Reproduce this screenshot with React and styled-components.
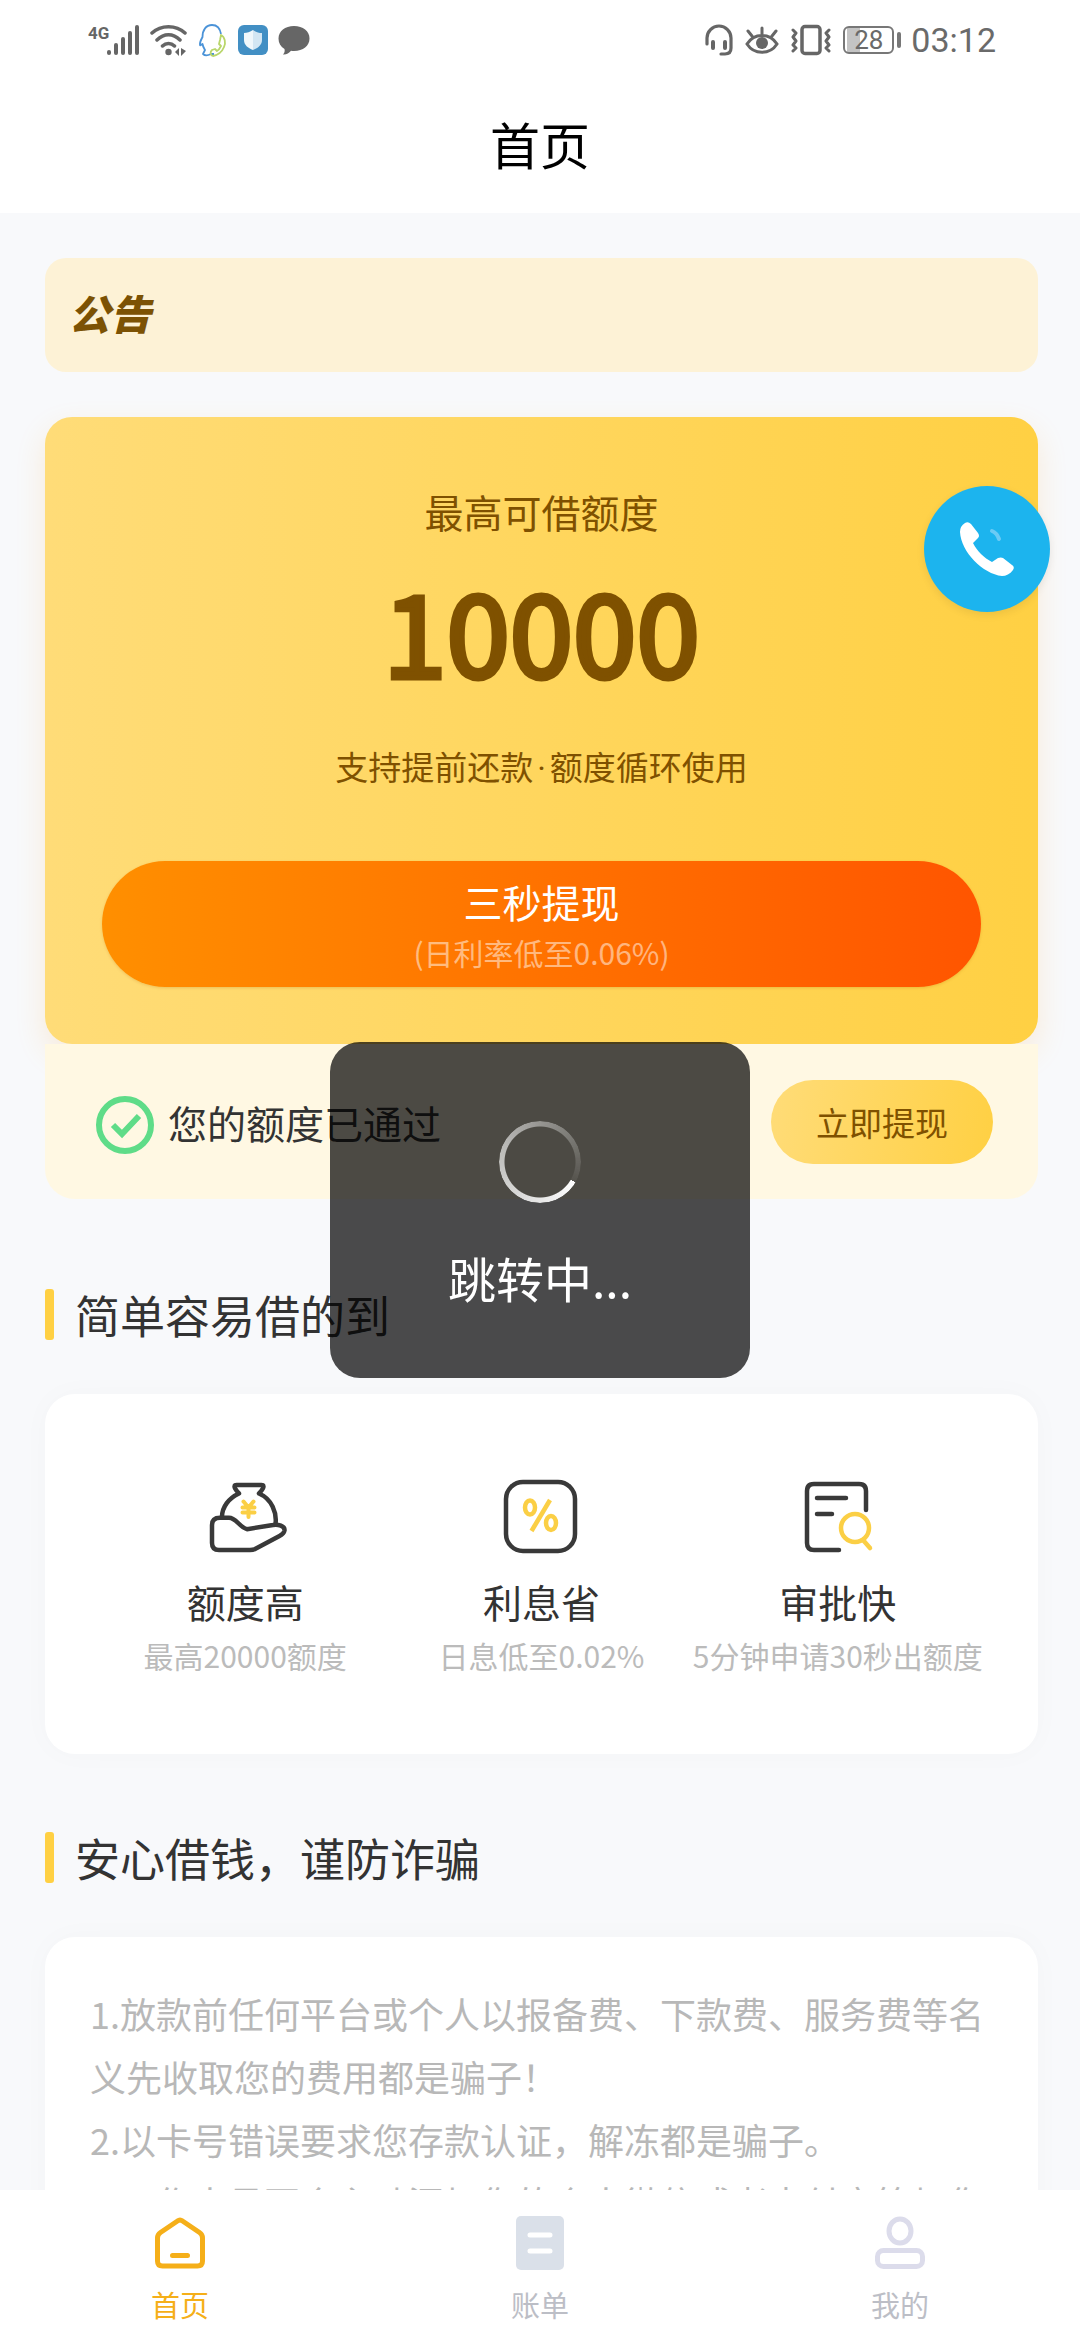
import { useState } from 'react'
import styled, { createGlobalStyle } from 'styled-components'

const GlobalStyle = createGlobalStyle`
  * {
    box-sizing: border-box;
  }

  body {
    margin: 0;
    background: #fff;
    color: #333;
    font-family: 'Noto Sans CJK SC', 'Noto Sans', sans-serif;
  }

  button {
    border: none;
    padding: 0;
    font-family: inherit;
    cursor: pointer;
  }

  h1, h2, h3, p {
    margin: 0;
    padding: 0;
    font-weight: 400;
  }
`

const Phone = styled.div`
  height: 100vh;
  display: flex;
  flex-direction: column;
  overflow: hidden;
`

const StatusBar = styled.div`
  flex: none;
  height: 80px;
  padding: 0 84px 0 88px;
  display: flex;
  align-items: center;
  justify-content: space-between;
  color: #6a6a6a;
  font-family: Roboto, sans-serif;
`

const StatusGroup = styled.div`
  display: flex;
  align-items: center;
  gap: ${(p) => p.$gap}px;

  svg {
    display: block;
  }
`

const Battery = styled.span`
  position: relative;
  display: flex;
  align-items: center;
  justify-content: center;
  width: 51px;
  height: 28px;
  margin-right: 5px;
  border: 2px solid #777;
  border-radius: 6px;
  background: linear-gradient(90deg, transparent 2px, #c4c4c4 2px, #c4c4c4 15px, transparent 15px);
  font-size: 26px;
  line-height: 24px;

  &::after {
    content: '';
    position: absolute;
    right: -9px;
    width: 4px;
    height: 16px;
    border-radius: 2px;
    background: #777;
  }
`

const Clock = styled.span`
  font-size: 34px;
  line-height: 40px;
`

const View = styled.div`
  flex: 1;
  min-height: 0;
  position: relative;
  display: flex;
  flex-direction: column;
`

const NavBar = styled.header`
  flex: none;
  height: 133px;
  padding-bottom: 8px;
  display: flex;
  align-items: center;
  justify-content: center;
  background: #fff;
`

const NavTitle = styled.h1`
  color: #000;
  font-size: 50px;
  line-height: 60px;
`

const Main = styled.main`
  flex: 1;
  min-height: 0;
  padding: 45px 42px 45px 45px;
  overflow-y: auto;
  scrollbar-width: none;
  background: #f8f9fb;
`

const Notice = styled.section`
  height: 114px;
  margin-bottom: 45px;
  padding: 0 24px 6px;
  display: flex;
  align-items: center;
  border-radius: 21px;
  background: #fdf2d6;
`

const NoticeTag = styled.strong`
  color: #7c5204;
  font-size: 41px;
  font-style: italic;
  font-weight: 900;
  line-height: 48px;
`

const QuotaCard = styled.section`
  padding: 64px 57px 57px;
  display: flex;
  flex-direction: column;
  align-items: center;
  border-radius: 27px;
  background: linear-gradient(90deg, #ffdc78, #ffd043);
  box-shadow: 0 12px 30px rgba(255, 160, 40, 0.16);
  color: #7f5100;
`

const QuotaLabel = styled.p`
  font-size: 39px;
  line-height: 60px;
`

const QuotaAmount = styled.p`
  margin: 28px 0 53px;
  font-size: 114px;
  line-height: 120px;
  -webkit-text-stroke: 5px #7f5100;
`

const QuotaHint = styled.p`
  margin-bottom: 71px;
  font-size: 33px;
  line-height: 48px;
`

const Dot = styled.span`
  margin: 0 4px;
  font-family: Roboto, sans-serif;
  line-height: 1;
`

const WithdrawButton = styled.button`
  width: 100%;
  height: 126px;
  padding-top: 6px;
  border-radius: 63px;
  background: linear-gradient(90deg, #ff8f00, #ff5500);
  box-shadow: 0 1px 3px rgba(160, 90, 0, 0.2);
  color: #fff;
  font-size: 39px;
  line-height: 51px;

  small {
    display: block;
    color: rgba(255, 255, 255, 0.5);
    font-size: 30px;
    line-height: 51px;
  }
`

const ApprovedBar = styled.section`
  height: 155px;
  margin-bottom: 12px;
  padding: 0 45px 0 50px;
  display: flex;
  align-items: center;
  gap: 13px;
  border-radius: 0 0 30px 30px;
  background: #fff8e3;
`

const ApprovedText = styled.p`
  flex: 1;
  font-size: 39px;
  line-height: 60px;
`

const SmallButton = styled.button`
  width: 222px;
  height: 84px;
  border-radius: 42px;
  background: linear-gradient(100deg, #ffdc78, #ffd043);
  color: #7f5100;
  font-size: 33px;
  line-height: 48px;
`

const SectionTitle = styled.h2`
  padding: 78px 0 54px;
  display: flex;
  align-items: center;
  gap: 21px;
  font-size: 45px;
  line-height: 51px;

  &::before {
    content: '';
    width: 9px;
    height: 51px;
    border-radius: 3px;
    background: #ffd043;
  }
`

const Panel = styled.section`
  border-radius: 30px;
  background: #fff;
  box-shadow: 0 0 30px rgba(0, 0, 0, 0.025);
`

const Features = styled(Panel)`
  height: 360px;
  padding: 81px 52px 0;
  display: grid;
  grid-template-columns: repeat(3, 1fr);
`

const Feature = styled.div`
  display: flex;
  flex-direction: column;
  align-items: center;
  white-space: nowrap;

  h3 {
    margin-top: 12px;
    font-size: 39px;
    line-height: 60px;
  }

  p {
    color: #bbb;
    font-size: 30px;
    line-height: 48px;
  }
`

const Tips = styled(Panel)`
  padding: 45px;
  color: #b8b8b8;
  font-size: 36px;
  line-height: 63px;
`

const TabBar = styled.nav`
  flex: none;
  height: 150px;
  display: grid;
  grid-template-columns: repeat(3, 1fr);
  background: #fff;
`

const Tab = styled.a`
  display: flex;
  flex-direction: column;
  align-items: center;
  padding-top: 26px;
  color: ${(p) => (p.$active ? '#f5af19' : '#bcbec6')};
  font-size: 29px;
  line-height: 48px;
  text-decoration: none;

  svg {
    margin-bottom: 10px;
  }
`

const CallButton = styled.button`
  position: absolute;
  top: 406px;
  right: 30px;
  width: 126px;
  height: 126px;
  border-radius: 50%;
  background: #1cb4ee;
  box-shadow: 0 3px 8px rgba(0, 0, 0, 0.08);

  svg {
    display: block;
  }
`

const Toast = styled.div`
  position: absolute;
  top: 50%;
  left: 50%;
  transform: translate(-50%, -50%);
  width: 420px;
  height: 336px;
  padding-top: 79px;
  display: flex;
  flex-direction: column;
  align-items: center;
  gap: 44px;
  border-radius: 30px;
  background: rgba(0, 0, 0, 0.7);
  color: #fff;
  font-size: 48px;
  line-height: 60px;
`

const Spinner = styled.span`
  flex: none;
  width: 82px;
  height: 82px;
  border-radius: 50%;
  background: conic-gradient(from 120deg, #fff, rgba(255, 255, 255, 0.6) 50%, rgba(255, 255, 255, 0.05));
  mask: radial-gradient(circle, transparent 35px, #000 36px);
`

const SignalIcon = () => (
  <svg width="52" height="36" viewBox="0 0 52 36" fill="#666">
    <text x="0" y="17" fontSize="17" fontWeight="700" fontFamily="Roboto, sans-serif">4G</text>
    <rect x="19" y="28" width="4" height="5" rx="2" />
    <rect x="26" y="21" width="4" height="12" rx="2" />
    <rect x="33" y="15" width="4" height="18" rx="2" />
    <rect x="40" y="9" width="4" height="24" rx="2" />
    <rect x="47" y="3" width="4" height="30" rx="2" />
  </svg>
)

const WifiIcon = () => (
  <svg width="38" height="36" viewBox="0 0 38 36" fill="none" stroke="#666" strokeWidth="3.5" strokeLinecap="round">
    <path d="M2 11C11 2.500 26 2.500 35 11M7 18C14 11 23 11 30 18M12.500 24C16 20.500 21 20.500 24.500 24" />
    <circle cx="18.500" cy="30" r="3.200" fill="#666" stroke="none" />
    <path d="M25 30l4-4v8zM31 26l5 3-5 5z" fill="#666" stroke="none" />
  </svg>
)

const AssistantIcon = () => (
  <svg width="30" height="36" viewBox="0 0 30 36" fill="none" strokeWidth="1.800" strokeLinejoin="round">
    <path d="M23 12C22 6 18.500 3 14 3 8 3 4.500 8 4.500 15c-1 2-3 5-2.500 8 1 1 2-1 2.500-1 .5 3 2 5 2.500 6l-2 4c2 2 6 1 8 0h3" stroke="#4b93d8" />
    <path d="M23 13c4 2 5 8 3 12-2 5-6 8-11 9-3-1-3-4-1-6l3-1 2 2c2-1 3-3 4-5l-2-2 1-4z" stroke="#b9d66b" />
  </svg>
)

const ShieldIcon = () => (
  <svg width="30" height="30" viewBox="0 0 30 30">
    <rect width="30" height="30" rx="6" fill="#428fc4" />
    <path d="M15 5c3 2 6 3 9 3v7c0 5-4 8-9 10z" fill="#d3e6f3" />
    <path d="M15 5c-3 2-6 3-9 3v7c0 5 4 8 9 10z" fill="#f0f7fb" />
  </svg>
)

const ChatIcon = () => (
  <svg width="32" height="32" viewBox="0 0 32 32" fill="#666">
    <path d="M16 2c9 0 15.500 5 15.500 12.500S25 27 16 27c-1 0-2 0-3-.2C11 29 8 31 5 30.500c1.500-1.500 2-3.500 1.500-5.500C2.500 22.500.5 19 .5 14.500.5 7 7 2 16 2z" />
  </svg>
)

const HeadsetIcon = () => (
  <svg width="28" height="32" viewBox="0 0 28 32" fill="none" stroke="#666" strokeWidth="3.200" strokeLinecap="round">
    <path d="M2 20v-6a12 12 0 0 1 24 0v10c0 4-2 6-6 6h-4" />
    <path d="M8 18v6M20 18v6" strokeWidth="4" />
  </svg>
)

const EyeIcon = () => (
  <svg width="34" height="32" viewBox="0 0 34 32" fill="none" stroke="#666" strokeWidth="3" strokeLinecap="round">
    <path d="M2 20C9 8.500 25 8.500 32 20 25 31 9 31 2 20zM17 10V4M7 12L3 7M27 12l4-5" />
    <circle cx="17" cy="19" r="6" fill="#666" stroke="none" />
  </svg>
)

const VibrateIcon = () => (
  <svg width="40" height="32" viewBox="0 0 40 32" fill="none" stroke="#666" strokeWidth="3.500" strokeLinecap="round" strokeLinejoin="round">
    <rect x="11" y="2.500" width="18" height="27" rx="3" />
    <path d="M2 6l3 3-3 4 3 4-3 4 3 3-3 3M38 6l-3 3 3 4-3 4 3 4-3 3 3 3" strokeWidth="3" />
  </svg>
)

// the ring sits a little low in its box
const PassedIcon = () => (
  <svg width="60" height="66" viewBox="0 0 60 66" fill="none" stroke="#5fdc88" strokeWidth="6">
    <circle cx="30" cy="36" r="26" />
    <path d="M18 36l9 9 17-18" />
  </svg>
)

const MoneyBagIcon = () => (
  <svg width="84" height="84" viewBox="0 0 84 84" fill="none" stroke="#393939" strokeWidth="4.500" strokeLinecap="round" strokeLinejoin="round">
    <path d="M19 42c0-10 7-19 17-23.500-3-3.500-4.500-5-4.500-7q0-1.500 2-1.500h25q2 0 2 1.500c0 2-1.500 3.500-4.500 7C69 24 74 38 72.500 49" />
    <path d="M17 42.700h9c7 0 10 9 18 11.500L70 50c5-1 12 1 11.500 5.500-.5 3-3 4.500-5 5.500L52 74q-2 1-5 1H16q-7 0-7-7V50q0-7.300 8-7.300z" />
    <path d="M40.500 26.500l5 6 5-6M39.500 32.500h12M39.500 37.500h12M45.500 32.500V42" stroke="#fbcf45" strokeWidth="4" />
  </svg>
)

const PercentIcon = () => (
  <svg width="84" height="84" viewBox="0 0 84 84" fill="none" stroke="#393939" strokeWidth="4.500">
    <rect x="7" y="7" width="69" height="69" rx="17" />
    <g stroke="#fbcf45">
      <ellipse cx="31" cy="32.500" rx="5" ry="7" />
      <ellipse cx="52" cy="48" rx="5" ry="7" />
      <path d="M51 25L32.500 56" />
    </g>
  </svg>
)

const ReviewIcon = () => (
  <svg width="84" height="84" viewBox="0 0 84 84" fill="none" stroke="#393939" strokeWidth="4.500" strokeLinecap="round">
    <path d="M70 35V16q0-7-7-7H18q-7 0-7 7v52q0 7 7 7h25M21 23h29M21 39h15" />
    <g stroke="#fbcf45">
      <circle cx="59" cy="53" r="14" />
      <path d="M67 65l7 8" />
    </g>
  </svg>
)

const HomeIcon = () => (
  <svg width="54" height="54" viewBox="0 0 54 54" fill="none" stroke="#f5af19" strokeWidth="5" strokeLinejoin="round" strokeLinecap="round">
    <path d="M24.500 5q2.500-2 5 0L46.500 16.500q3 2 3 5.500V45q0 5-5 5h-35q-5 0-5-5V22q0-3.500 3-5.500zM19.500 39.500h15" />
  </svg>
)

const BillIcon = () => (
  <svg width="54" height="54" viewBox="0 0 54 54">
    <rect x="3" width="48" height="54" rx="5" fill="#dae0e9" />
    <path d="M17 19h20M17 35h20" stroke="#fff" strokeWidth="5" strokeLinecap="round" />
  </svg>
)

const UserIcon = () => (
  <svg width="54" height="54" viewBox="0 0 54 54" fill="none" stroke="#dcdceb" strokeWidth="5">
    <ellipse cx="27" cy="15" rx="11" ry="12" />
    <rect x="4.500" y="34.500" width="45" height="16" rx="6" />
  </svg>
)

const CallIcon = () => (
  <svg width="126" height="126" viewBox="0 0 126 126" fill="none">
    <path
      d="M41 37q3-2 6 1l7 9q2 3 0 5l-5 5c4 8 11 15 19 19l6-4q3-1 5 0l9 7q3 2 1 5c-3 4-7 6-11 6-19-2-41-24-42-44q0-6 5-9z"
      fill="#fff"
    />
    <path d="M68 45q5 2 7 8" stroke="#6bcbf5" strokeWidth="4" strokeLinecap="round" />
  </svg>
)

const features = [
  { icon: MoneyBagIcon, title: '额度高', desc: '最高20000额度' },
  { icon: PercentIcon, title: '利息省', desc: '日息低至0.02%' },
  { icon: ReviewIcon, title: '审批快', desc: '5分钟申请30秒出额度' },
]

const tips = [
  '1.放款前任何平台或个人以报备费、下款费、服务费等名义先收取您的费用都是骗子！',
  '2.以卡号错误要求您存款认证，解冻都是骗子。',
  '3.工作人员不会主动添加您的个人微信或者支付宝等加您',
]

const tabs = [
  { id: 'home', label: '首页', icon: HomeIcon },
  { id: 'bill', label: '账单', icon: BillIcon },
  { id: 'mine', label: '我的', icon: UserIcon },
]

function App() {
  const [tab, setTab] = useState('home')

  return (
    <Phone>
      <GlobalStyle />
      <StatusBar>
        <StatusGroup $gap={10}>
          <SignalIcon />
          <WifiIcon />
          <AssistantIcon />
          <ShieldIcon />
          <ChatIcon />
        </StatusGroup>
        <StatusGroup $gap={12}>
          <HeadsetIcon />
          <EyeIcon />
          <VibrateIcon />
          <Battery>28</Battery>
          <Clock>03:12</Clock>
        </StatusGroup>
      </StatusBar>

      <View>
        <NavBar>
          <NavTitle>首页</NavTitle>
        </NavBar>

        <Main>
          <Notice>
            <NoticeTag>公告</NoticeTag>
          </Notice>

          <QuotaCard>
            <QuotaLabel>最高可借额度</QuotaLabel>
            <QuotaAmount>10000</QuotaAmount>
            <QuotaHint>
              支持提前还款<Dot>·</Dot>额度循环使用
            </QuotaHint>
            <WithdrawButton type="button">
              三秒提现
              <small>(日利率低至0.06%)</small>
            </WithdrawButton>
          </QuotaCard>
          <ApprovedBar>
            <PassedIcon />
            <ApprovedText>您的额度已通过</ApprovedText>
            <SmallButton type="button">立即提现</SmallButton>
          </ApprovedBar>

          <SectionTitle>简单容易借的到</SectionTitle>
          <Features>
            {features.map(({ icon: Icon, title, desc }) => (
              <Feature key={title}>
                <Icon />
                <h3>{title}</h3>
                <p>{desc}</p>
              </Feature>
            ))}
          </Features>

          <SectionTitle>安心借钱，谨防诈骗</SectionTitle>
          <Tips>
            {tips.map((tip) => (
              <p key={tip}>{tip}</p>
            ))}
          </Tips>
        </Main>

        <TabBar>
          {tabs.map(({ id, label, icon: Icon }) => (
            <Tab key={id} href={`#${id}`} $active={tab === id} onClick={() => setTab(id)}>
              <Icon />
              {label}
            </Tab>
          ))}
        </TabBar>

        <CallButton type="button" aria-label="客服">
          <CallIcon />
        </CallButton>

        <Toast role="status">
          <Spinner />
          跳转中...
        </Toast>
      </View>
    </Phone>
  )
}

export default App
